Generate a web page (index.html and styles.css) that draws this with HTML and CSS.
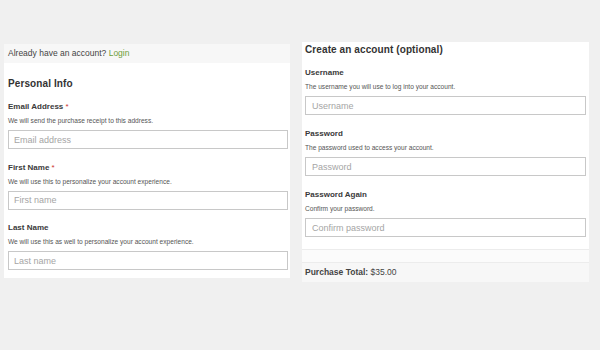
FILE: index.html
```html
<!DOCTYPE html>
<html lang="en">
<head>
  <meta charset="UTF-8">
  <title>Checkout</title>
  <link rel="stylesheet" href="styles.css">
</head>
<body>
  <div class="checkout">
    <div class="panel panel-left">
      <div class="login-bar">Already have an account? <a href="#">Login</a></div>
      <div class="panel-body">
        <h2>Personal Info</h2>
        <div class="field">
          <label>Email Address <span class="req">*</span></label>
          <p class="desc">We will send the purchase receipt to this address.</p>
          <input type="text" placeholder="Email address">
        </div>
        <div class="field">
          <label>First Name <span class="req">*</span></label>
          <p class="desc">We will use this to personalize your account experience.</p>
          <input type="text" placeholder="First name">
        </div>
        <div class="field">
          <label>Last Name</label>
          <p class="desc">We will use this as well to personalize your account experience.</p>
          <input type="text" placeholder="Last name">
        </div>
      </div>
    </div>

    <div class="panel panel-right">
      <div class="panel-body">
        <h2>Create an account (optional)</h2>
        <div class="field">
          <label>Username</label>
          <p class="desc">The username you will use to log into your account.</p>
          <input type="text" placeholder="Username">
        </div>
        <div class="field">
          <label>Password</label>
          <p class="desc">The password used to access your account.</p>
          <input type="password" placeholder="Password">
        </div>
        <div class="field">
          <label>Password Again</label>
          <p class="desc">Confirm your password.</p>
          <input type="password" placeholder="Confirm password">
        </div>
      </div>
      <div class="spacer"></div>
      <div class="total"><b>Purchase Total:</b> $35.00</div>
    </div>
  </div>
</body>
</html>
```

FILE: styles.css
```css
body {
  margin: 0;
  background-color: #f0f0f0;
  font-family: "Liberation Sans", Arial, sans-serif;
  color: #333;
}

.checkout {
  display: flex;
  align-items: flex-start;
  gap: 12px;
  padding: 42px 0 0 4px;
}

.panel {
  background-color: #fff;
}

.panel-left {
  width: 286px;
  margin-top: 2px;
}

.panel-right {
  width: 287px;
}

.login-bar {
  height: 19px;
  line-height: 19px;
  padding-left: 4px;
  background-color: #f7f7f7;
  font-size: 8.5px;
  color: #444;
}

.login-bar a {
  color: #6d9e3a;
  text-decoration: none;
}

.panel-left .panel-body {
  padding: 0 2px 8px 4px;
}

.panel-right .panel-body {
  padding: 1px 3px 0 3px;
}

h2 {
  margin: 0;
  font-size: 10px;
  line-height: 14px;
  font-weight: bold;
  letter-spacing: 0.1px;
  color: #333;
}

.panel-left h2 {
  margin-top: 15px;
  line-height: 12px;
}

.field {
  margin-top: 13.5px;
}

.panel-right .field {
  margin-top: 14px;
}

.panel-left h2 + .field {
  margin-top: 12px;
}

.panel-right h2 + .field {
  margin-top: 11px;
}

.field label {
  display: block;
  font-size: 8px;
  line-height: 10px;
  font-weight: bold;
  color: #3a3a3a;
}

.req {
  color: #c33;
  font-weight: normal;
}

.desc {
  margin: 5px 0 5px;
  font-size: 6.6px;
  line-height: 8px;
  color: #555;
}

.field input {
  display: block;
  box-sizing: border-box;
  width: 100%;
  height: 19px;
  margin: 0;
  padding: 0 5px;
  border: 1px solid #c8c8c8;
  border-radius: 0;
  font-family: "Liberation Sans", Arial, sans-serif;
  font-size: 9px;
  color: #555;
  background-color: #fff;
}

.panel-right .field input {
  padding-left: 6px;
}

.field input::placeholder {
  color: #a5a5a5;
}

.spacer {
  height: 12px;
  margin-top: 12px;
  border-top: 1px solid #ececec;
  border-bottom: 1px solid #ececec;
  background-color: #fbfbfb;
}

.total {
  height: 19px;
  line-height: 19px;
  padding-left: 3px;
  background-color: #f7f7f7;
  font-size: 8.5px;
  color: #444;
}
```
